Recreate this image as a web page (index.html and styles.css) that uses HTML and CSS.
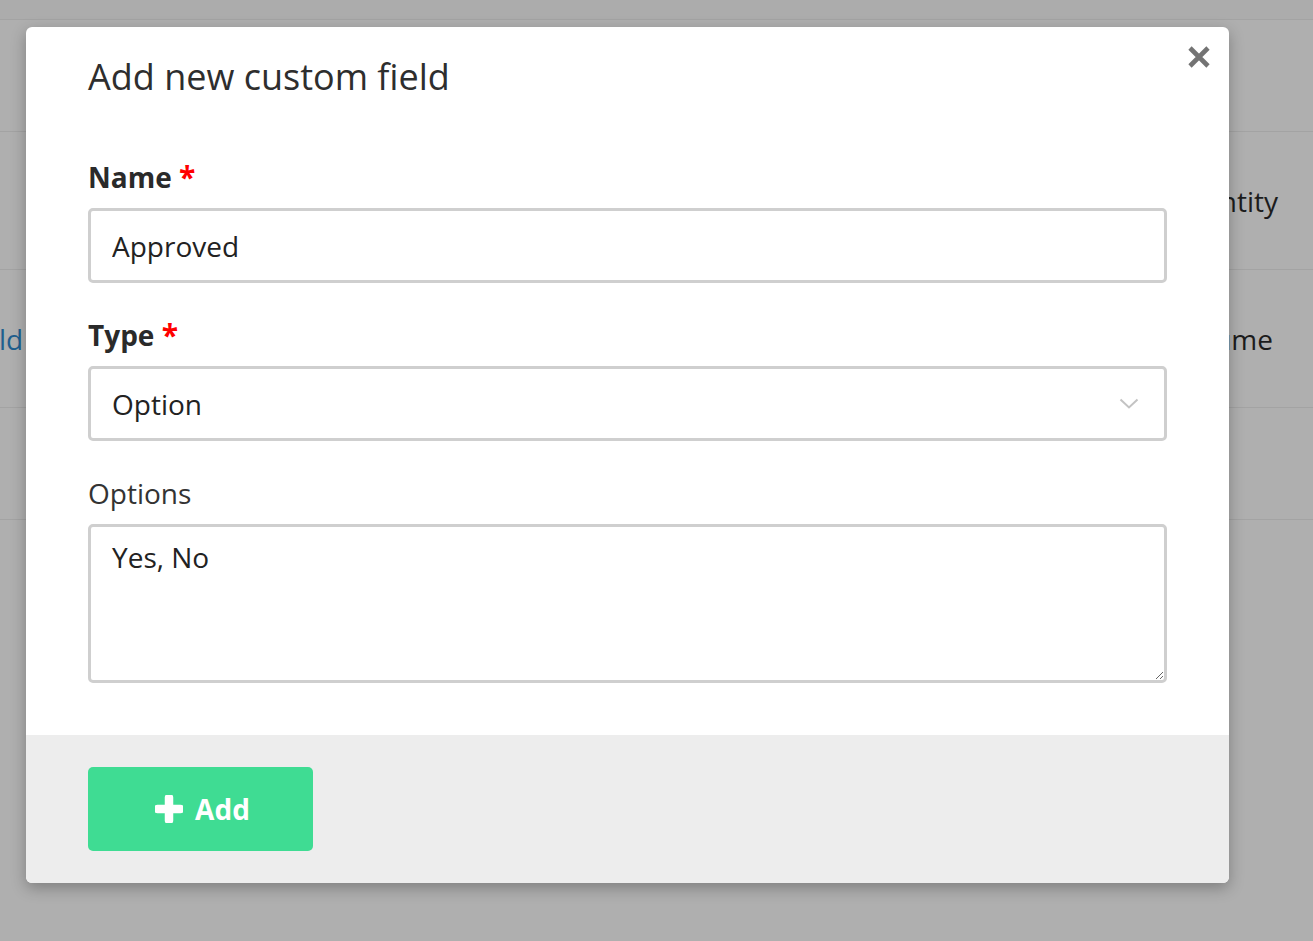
FILE: index.html
```html
<!DOCTYPE html>
<html lang="en">
<head>
<meta charset="utf-8">
<title>Add new custom field</title>
<link rel="stylesheet" href="styles.css">
</head>
<body>
<div class="page">
  <div class="row row-top"></div>
  <div class="row row-a"></div>
  <div class="row row-b"><span class="cell-left"></span><span class="cell-right">Quantity</span></div>
  <div class="row row-c"><span class="cell-left link">ld</span><span class="cell-right cell-right-c">Volume</span></div>
  <div class="row row-d"></div>
</div>

<div class="modal">
  <div class="modal-body">
    <h2 class="modal-title">Add new custom field</h2>
    <button class="close" type="button" aria-label="Close">
      <svg width="24" height="24" viewBox="0 0 24 24"><path d="M3 3 L21 21 M21 3 L3 21" stroke="#737373" stroke-width="4.6" stroke-linecap="butt" fill="none"/></svg>
    </button>
    <div class="group">
      <label class="label strong">Name <span class="req">*</span></label>
      <input class="control" type="text" value="Approved">
    </div>
    <div class="group">
      <label class="label strong">Type <span class="req">*</span></label>
      <div class="control select">
        <span>Option</span>
        <svg width="20" height="12" viewBox="0 0 20 12"><path d="M1.5 1.5 L10 9.5 L18.5 1.5" stroke="#c3c3c3" stroke-width="2" fill="none"/></svg>
      </div>
    </div>
    <div class="group">
      <label class="label">Options</label>
      <textarea class="control area">Yes, No</textarea>
    </div>
  </div>
  <div class="modal-footer">
    <button class="btn-add" type="button">
      <svg width="28" height="28" viewBox="0 0 28 28"><path d="M14 2.5 V25.5 M2.5 14 H25.5" stroke="#fff" stroke-width="8.5" stroke-linecap="round" fill="none"/></svg>
      <span>Add</span>
    </button>
  </div>
</div>
</body>
</html>
```
FILE: styles.css
```css
html, body {
  margin: 0;
  padding: 0;
}
body {
  background: #afafaf;
  font-family: "Open Sans", "Noto Sans", sans-serif;
  width: 1313px;
  height: 941px;
  overflow: hidden;
  position: relative;
}
.page {
  display: flex;
  flex-direction: column;
}
.row {
  border-bottom: 1px solid #a3a3a3;
  display: flex;
  align-items: center;
  justify-content: space-between;
  font-size: 28px;
  color: #1c1c1c;
}
.row-top { height: 19px; background: #acacac; }
.row-a { height: 111px; }
.row-b { height: 137px; }
.row-c { height: 137px; }
.row-d { height: 111px; }
.cell-left { margin-left: -1px; }
.link { color: #1f5f8e; }
.cell-right { padding-right: 35px; }
.cell-right-c { padding-right: 40px; }

.modal {
  position: absolute;
  left: 26px;
  top: 27px;
  width: 1203px;
  background: #fff;
  border-radius: 6px;
  box-shadow: 0 5px 15px rgba(0, 0, 0, 0.28);
  overflow: hidden;
}
.modal-body {
  position: relative;
  padding: 28px 62px 52px;
}
.modal-title {
  margin: 0;
  font-size: 36px;
  line-height: 44px;
  font-weight: 400;
  color: #2e2e2e;
}
.close {
  position: absolute;
  top: 18px;
  right: 18px;
  width: 24px;
  height: 24px;
  padding: 0;
  border: 0;
  background: none;
  display: flex;
}
.group {
  display: flex;
  flex-direction: column;
  margin-top: 34px;
}
.group:first-of-type { margin-top: 60px; }
.label {
  font-size: 28px;
  line-height: 36px;
  color: #333;
  margin-bottom: 13px;
}
.strong { font-weight: 700; color: #2a2a2a; }
.req { color: #f00; font-size: 30px; }
.control {
  box-sizing: border-box;
  width: 100%;
  height: 75px;
  border: 3px solid #cfcfcf;
  border-radius: 5px;
  padding: 0 21px;
  font-family: "Open Sans", "Noto Sans", sans-serif;
  font-size: 28px;
  color: #222;
  background: #fff;
  outline: none;
  margin: 0;
}
.select {
  display: flex;
  align-items: center;
  justify-content: space-between;
  padding-right: 25px;
}
.area {
  height: 159px;
  padding: 11px 21px;
  line-height: 38px;
  display: block;
}
.modal-footer {
  background: #ededed;
  padding: 32px 62px;
}
.btn-add {
  width: 225px;
  height: 84px;
  border: 0;
  border-radius: 5px;
  background: #3fdc93;
  color: #fff;
  font-family: "Open Sans", "Noto Sans", sans-serif;
  font-weight: 700;
  font-size: 28px;
  display: flex;
  align-items: center;
  justify-content: center;
  gap: 12px;
  padding: 0 0 0 4px;
}
```
